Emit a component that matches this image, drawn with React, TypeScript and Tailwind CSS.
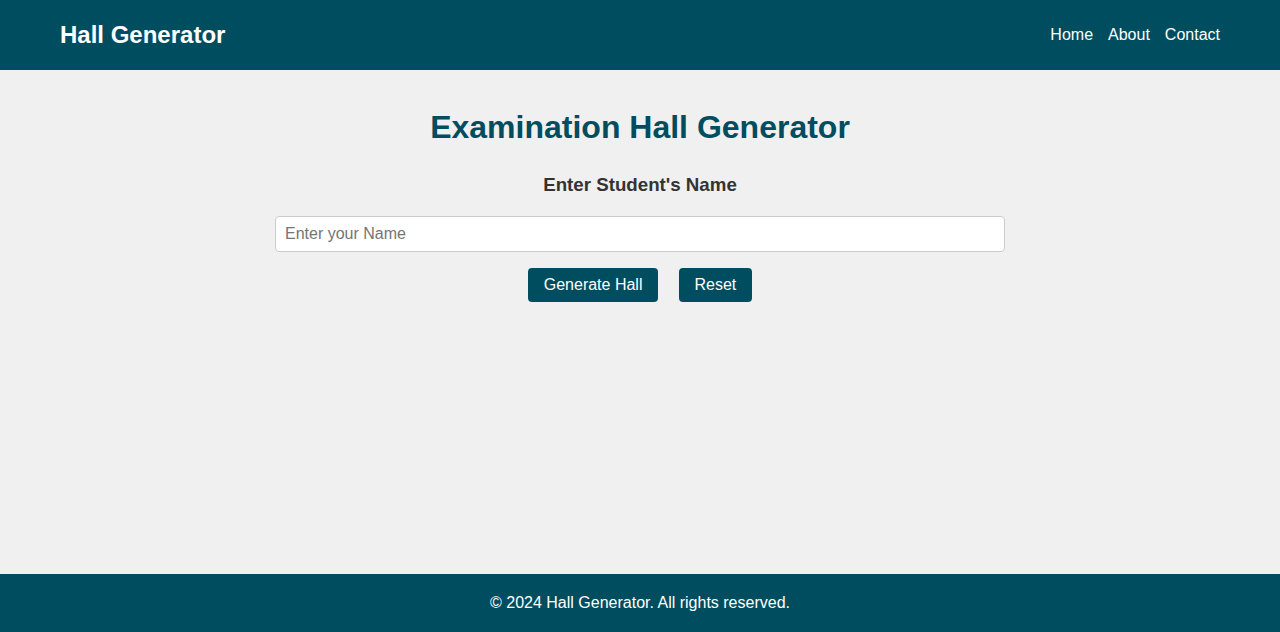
export default function App() {
  return (
    <div className="min-h-screen flex flex-col bg-[#f0f0f0] font-['Liberation_Sans',Arial,sans-serif]">
      <header className="h-[70px] bg-[#004d60] flex items-center justify-between px-[60px] text-white">
        <h1 className="text-[24px] font-bold">Hall Generator</h1>
        <nav className="flex gap-[15px] text-[16px]">
          <a href="#">Home</a>
          <a href="#">About</a>
          <a href="#">Contact</a>
        </nav>
      </header>

      <main className="flex-1 flex flex-col items-center">
        <h2 className="mt-[39px] text-[32px] leading-[37px] font-bold text-[#004d60]">
          Examination Hall Generator
        </h2>
        <h3 className="mt-[28px] text-[18.72px] leading-[22px] font-bold text-[#333]">
          Enter Student's Name
        </h3>
        <input
          type="text"
          placeholder="Enter your Name"
          className="mt-[20px] w-[730px] h-[36px] px-[9px] bg-white border border-[#ccc] rounded-[4px] text-[16px] placeholder:text-[#757575] outline-none"
        />
        <div className="mt-[16px] flex gap-[21px]">
          <button className="h-[34px] px-[15.5px] bg-[#004d60] text-white text-[16px] rounded-[4px]">
            Generate Hall
          </button>
          <button className="h-[34px] px-[15.5px] bg-[#004d60] text-white text-[16px] rounded-[4px]">
            Reset
          </button>
        </div>
      </main>

      <footer className="h-[58px] bg-[#004d60] flex items-center justify-center text-white text-[16px]">
        © 2024 Hall Generator. All rights reserved.
      </footer>
    </div>
  );
}
